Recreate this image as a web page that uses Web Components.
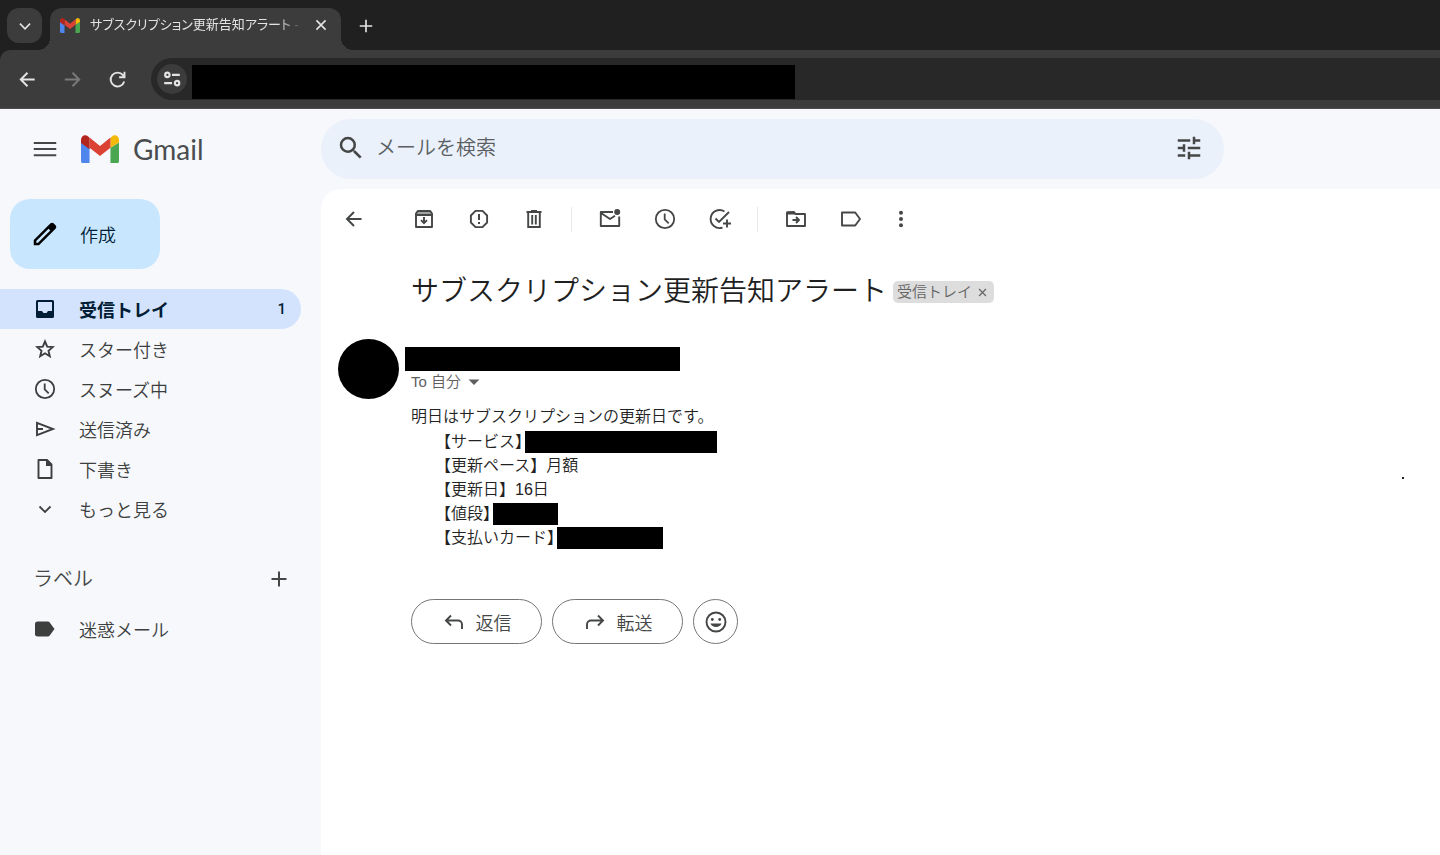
<!DOCTYPE html>
<html lang="ja">
<head>
<meta charset="utf-8">
<meta name="viewport" content="width=device-width, initial-scale=1">
<title>サブスクリプション更新告知アラート - Gmail</title>
<style>
    body {
        margin: 0;
        min-height: 100vh;
        display: flex;
        flex-direction: column;
        background: #f6f8fc;
        color: #444746;
        font-family: "Liberation Sans", "Noto Sans CJK JP", sans-serif;
        font-size: 18px;
    }
</style>
</head>
<body>
<browser-chrome tab-title="サブスクリプション更新告知アラート -"></browser-chrome>
<mail-app>
    <mail-header slot="header"></mail-header>
    <mail-sidebar slot="sidebar">
        <nav-item icon="inbox" count="1" active>受信トレイ</nav-item>
        <nav-item icon="star">スター付き</nav-item>
        <nav-item icon="clock">スヌーズ中</nav-item>
        <nav-item icon="send">送信済み</nav-item>
        <nav-item icon="draft">下書き</nav-item>
        <nav-item icon="chevron">もっと見る</nav-item>
        <nav-item slot="labels" icon="label-fill">迷惑メール</nav-item>
    </mail-sidebar>
    <mail-toolbar></mail-toolbar>
    <mail-message subject="サブスクリプション更新告知アラート" label="受信トレイ">
        <span slot="lead">明日はサブスクリプションの更新日です。</span>
        <mail-field name="サービス" hide="192"></mail-field>
        <mail-field name="更新ペース">月額</mail-field>
        <mail-field name="更新日">16日</mail-field>
        <mail-field name="値段" hide="65"></mail-field>
        <mail-field name="支払いカード" hide="106"></mail-field>
    </mail-message>
</mail-app>

<script>
const ICONS = {
    'menu': '<path d="M3 17.700h18v-1.600H3v1.600zm0-4.900h18v-1.600H3v1.600zm0-6.500v1.600h18V6.300H3z"/>',
    'search': '<path d="M15.5 14h-.79l-.28-.27A6.47 6.47 0 0 0 16 9.5 6.5 6.5 0 1 0 9.5 16c1.61 0 3.09-.59 4.23-1.57l.27.28v.79l5 4.99L20.49 19l-4.99-5zm-6 0a4.5 4.5 0 1 1 0-9 4.5 4.5 0 0 1 0 9z"/>',
    'tune': '<path d="M3 17v2h6v-2H3zM3 5v2h10V5H3zm10 16v-2h8v-2h-8v-2h-2v6h2zM7 9v2H3v2h4v2h2V9H7zm14 4v-2H11v2h10zm-6-4h2V7h4V5h-4V3h-2v6z"/>',
    'pen': '<path d="M20.41 4.94l-1.35-1.35c-.78-.78-2.05-.78-2.83 0L13.4 6.41 3 16.82V21h4.18l10.46-10.46 2.77-2.77c.79-.78.79-2.05 0-2.83zm-14 14.12L5 19v-1.36l9.82-9.82 1.41 1.41-9.82 9.83z"/>',
    'inbox': '<path d="M19.500 3h-15A1.500 1.500 0 0 0 3 4.500v15A1.500 1.500 0 0 0 4.500 21h15a1.500 1.500 0 0 0 1.500-1.500v-15A1.500 1.500 0 0 0 19.500 3zm-.5 11h-4l-1.500 2h-3L9 14H5V5h14v9z"/>',
    'star': '<path fill="none" stroke="currentColor" stroke-width="1.9" d="M12 4.500l2.200 5.100 5.500.5-4.200 3.700 1.300 5.400-4.800-2.900-4.800 2.900 1.300-5.400-4.200-3.700 5.500-.5z"/>',
    'clock': '<g fill="none" stroke="currentColor" stroke-width="1.8"><circle cx="12" cy="12" r="9.200"/><path d="M11.700 6.500V12.400l4 4"/></g>',
    'send': '<path fill="none" stroke="currentColor" stroke-width="1.9" d="M4 5.800L20 12 4 18.200zM4 12h6"/>',
    'draft': '<path fill="none" stroke="currentColor" stroke-width="1.9" stroke-linejoin="round" d="M6 3h8l4.500 4.500V21H5.500V3z"/><path d="M13 3v6h6l-5-6z"/>',
    'chevron': '<path fill="none" stroke="currentColor" stroke-width="1.8" d="M6.500 9.500l5.500 5.500 5.500-5.500"/>',
    'label-fill': '<path d="M16.500 5.300C16.100 4.800 15.600 4.500 15 4.500H4.800C3.400 4.500 2 5.300 2 6.700v10.600c0 1.400 1.400 2.200 2.800 2.200H15c.6 0 1.100-.3 1.500-.8L21.500 12z"/>',
    'label': '<path fill="none" stroke="currentColor" stroke-width="1.9" stroke-linejoin="round" d="M3 5.500h13.200L21 12l-4.800 6.500H3z"/>',
    'plus': '<path fill="none" stroke="currentColor" stroke-width="2" d="M12 4.500v15M4.500 12h15"/>',
    'back': '<path fill="none" stroke="currentColor" stroke-width="2" d="M19.500 12H5M12 5l-7 7 7 7"/>',
    'forward': '<path fill="none" stroke="currentColor" stroke-width="2" d="M4 12h14.500M12 5l7 7-7 7"/>',
    'reload': '<path fill="none" stroke="currentColor" stroke-width="2" d="M19 14a7.200 7.200 0 1 1-1.300-6.500l1.500 1.800M19.300 4v5.600h-5.600"/>',
    'close': '<path fill="none" stroke="currentColor" stroke-width="2" d="M6.500 6.500l11 11M17.500 6.500l-11 11"/>',
    'site': '<g fill="none" stroke="currentColor" stroke-width="2.400"><circle cx="7" cy="7.500" r="2.400"/><path d="M12 7.500H20.500M3.500 16.500H12"/><circle cx="17.500" cy="16.500" r="2.400"/></g>',
    'archive': '<path fill="none" stroke="currentColor" stroke-width="1.900" stroke-linejoin="round" d="M4 6.500V20h16V6.500L18.200 4H5.800zM4 8h16"/><path fill-opacity=".5" d="M4 5h16v3H4z"/><path fill="none" stroke="currentColor" stroke-width="1.900" d="M12 10v6M9 13.200l3 3 3-3"/>',
    'spam': '<path fill="none" stroke="currentColor" stroke-width="1.900" stroke-linejoin="round" d="M8.500 3.900h7L20.100 8.500v7l-4.600 4.600h-7L3.900 15.500v-7z"/><path d="M11 7h2v6h-2zM11 15h2v2h-2z"/>',
    'trash': '<path fill="none" stroke="currentColor" stroke-width="1.900" d="M4.500 5h15M9 4h6M6.200 5v15h11.600V5M10.200 8v9.500M13.800 8v9.500"/>',
    'unread': '<path fill="none" stroke="currentColor" stroke-width="1.900" stroke-linejoin="round" d="M15 5H2.800v14h18.400V9.500M3 6l9 6 5-3.200"/><circle cx="19.200" cy="5" r="3"/>',
    'task': '<path fill="none" stroke="currentColor" stroke-width="1.900" d="M16.500 4.500A9 9 0 1 0 14.500 20.600M7.500 11.500l3.500 3.500L21 5M19 12.500v8M15 16.500h8"/>',
    'move': '<path fill="none" stroke="currentColor" stroke-width="1.900" stroke-linejoin="round" d="M3 5.500V19h18V7H11.500L10 5zM8.500 13h6M12 10l3 3-3 3"/><path d="M3 4.500h7l2 3H3z"/>',
    'more': '<circle cx="12" cy="5.800" r="2"/><circle cx="12" cy="12" r="2"/><circle cx="12" cy="18.200" r="2"/>',
    'reply': '<path fill="none" stroke="currentColor" stroke-width="1.900" d="M9 5.500L4 10.500l5 5M4.500 10.500H16a4 4 0 0 1 4 4V19"/>',
    'send-on': '<path fill="none" stroke="currentColor" stroke-width="1.900" d="M15 5.500l5 5-5 5M19.500 10.500H8a4 4 0 0 0-4 4V19"/>',
    'smile': '<circle cx="12" cy="12" r="9.500" fill="none" stroke="currentColor" stroke-width="1.900"/><circle cx="8.300" cy="9.500" r="1.400"/><circle cx="15.700" cy="9.500" r="1.400"/><path d="M6.500 13.500h11c-.7 2.200-2.900 3.500-5.500 3.500s-4.800-1.300-5.500-3.500z"/>',
    'caret': '<path d="M5.500 9h13L12 15.500z"/>',
    'gmail': `<path fill="#4f86ee" d="M0 8v19a3 3 0 0 0 3 3h6V13.500z"/>
        <path fill="#4aa651" d="M31 30h6a3 3 0 0 0 3-3V8l-9 5.500z"/>
        <path fill="#f4b80a" d="M31 3.500v10L40 8V5c0-4.300-4.600-6.200-7.500-3.500z"/>
        <path fill="#dc4234" d="M9 13.500v-11L20 11.500 31 2.500v11L20 22z"/>
        <path fill="#b3261e" d="M0 5v3.500l9 6.500V3L7.500 1.500C4.600-1.200 0 .7 0 5z"/>`
};

class SvgIcon extends HTMLElement {
    connectedCallback() {
        const name = this.getAttribute('name');
        const size = this.getAttribute('size') || 24;
        const box = name === 'gmail' ? '0 0 40 30' : '0 0 24 24';
        this.attachShadow({ mode: 'open' });
        this.shadowRoot.innerHTML = `
            <style>
                :host { display: inline-flex; flex: none; }
                svg { display: block; fill: currentColor; }
            </style>
            <svg width="${size}" height="${name === 'gmail' ? size * 3 / 4 : size}" viewBox="${box}" aria-hidden="true">${ICONS[name]}</svg>
        `;
    }
}

class BrowserChrome extends HTMLElement {
    connectedCallback() {
        this.attachShadow({ mode: 'open' });
        this.shadowRoot.innerHTML = `
            <style>
                :host { display: block; background: #202020; color: #e3e3e3; }
                button {
                    display: flex;
                    align-items: center;
                    justify-content: center;
                    padding: 0;
                    border: 0;
                    background: none;
                    color: inherit;
                }
                .tabs { display: flex; align-items: center; height: 42px; padding: 8px 8px 0 7px; }
                .tab-list {
                    align-self: flex-start;
                    width: 35px;
                    height: 35px;
                    margin-right: 8px;
                    border-radius: 12px;
                    background: #3c3c3c;
                }
                .tab {
                    position: relative;
                    display: flex;
                    align-items: center;
                    box-sizing: border-box;
                    width: 291px;
                    height: 42px;
                    padding: 0 10px 8px;
                    border-radius: 12px 12px 0 0;
                    background: #3c3c3c;
                }
                .tab::before, .tab::after {
                    content: "";
                    position: absolute;
                    bottom: 0;
                    width: 12px;
                    height: 12px;
                }
                .tab::before { right: 100%; background: radial-gradient(circle at 0 0, transparent 12px, #3c3c3c 12px); }
                .tab::after { left: 100%; background: radial-gradient(circle at 100% 0, transparent 12px, #3c3c3c 12px); }
                .title {
                    flex: 1;
                    margin: 0 8px 0 10px;
                    overflow: hidden;
                    white-space: nowrap;
                    font-size: 13px;
                    line-height: 20px;
                    font-feature-settings: "palt";
                    -webkit-mask-image: linear-gradient(to right, #000 88%, transparent);
                    mask-image: linear-gradient(to right, #000 88%, transparent);
                }
                .new { width: 30px; height: 35px; margin-left: 10px; align-self: flex-start; }
                .bar {
                    display: flex;
                    align-items: center;
                    height: 58px;
                    padding-left: 12px;
                    border-bottom: 1px solid #4c4c4c;
                    border-radius: 10px 0 0 0;
                    background: #3c3c3c;
                }
                .bar > button { width: 30px; height: 30px; margin-right: 15px; }
                .bar > button:disabled { color: #7a7a7a; }
                .address {
                    flex: 1;
                    display: flex;
                    align-items: center;
                    height: 42px;
                    margin-left: 4px;
                    padding-left: 6px;
                    border-radius: 21px 0 0 21px;
                    background: #282828;
                }
                .site { width: 30px; height: 30px; border-radius: 50%; background: #3c3c3c; }
                .url { width: 603px; height: 34px; margin: 6px 0 0 5px; background: #000; }
            </style>
            <div class="tabs">
                <button class="tab-list" aria-label="タブを検索"><svg-icon name="chevron" size="22"></svg-icon></button>
                <div class="tab">
                    <svg-icon name="gmail" size="20"></svg-icon>
                    <span class="title">${this.getAttribute('tab-title')}</span>
                    <button aria-label="閉じる"><svg-icon name="close" size="20"></svg-icon></button>
                </div>
                <button class="new" aria-label="新しいタブ"><svg-icon name="plus" size="20"></svg-icon></button>
            </div>
            <div class="bar">
                <button aria-label="戻る"><svg-icon name="back" size="23"></svg-icon></button>
                <button aria-label="進む" disabled><svg-icon name="forward" size="23"></svg-icon></button>
                <button aria-label="再読み込み"><svg-icon name="reload" size="23"></svg-icon></button>
                <div class="address">
                    <button class="site" aria-label="サイト情報"><svg-icon name="site" size="22"></svg-icon></button>
                    <div class="url"></div>
                </div>
            </div>
        `;
    }
}

class MailApp extends HTMLElement {
    connectedCallback() {
        this.attachShadow({ mode: 'open' });
        this.shadowRoot.innerHTML = `
            <style>
                :host { flex: 1; display: flex; flex-direction: column; }
                .content { flex: 1; display: grid; grid-template-columns: 321px minmax(0, 1fr); }
                main { border-radius: 20px 0 0 0; background: #fff; }
            </style>
            <slot name="header"></slot>
            <div class="content">
                <slot name="sidebar"></slot>
                <main><slot></slot></main>
            </div>
        `;
    }
}

class MailHeader extends HTMLElement {
    connectedCallback() {
        this.attachShadow({ mode: 'open' });
        this.shadowRoot.innerHTML = `
            <style>
                :host { display: flex; align-items: center; height: 80px; }
                button { display: flex; padding: 0; border: 0; background: none; color: inherit; }
                .brand {
                    display: flex;
                    align-items: center;
                    box-sizing: border-box;
                    width: 321px;
                    padding-left: 30px;
                }
                .logo {
                    display: flex;
                    align-items: center;
                    gap: 14px;
                    margin-left: 21px;
                    color: #4a4d50;
                    font: 28px/40px Lato, Roboto, sans-serif;
                    text-decoration: none;
                }
                form {
                    flex: 0 1 903px;
                    display: flex;
                    align-items: center;
                    box-sizing: border-box;
                    height: 60px;
                    padding: 0 20px 2px 15px;
                    border-radius: 30px;
                    background: #eaf1fb;
                }
                input {
                    flex: 1;
                    min-width: 0;
                    padding: 0;
                    margin: 0 12px 0 10px;
                    border: 0;
                    outline: 0;
                    background: none;
                    font: inherit;
                    font-size: 20px;
                    font-weight: 350;
                }
                input::placeholder { color: #5b5f63; opacity: 1; }
            </style>
            <div class="brand">
                <button aria-label="メインメニュー"><svg-icon name="menu" size="30"></svg-icon></button>
                <a class="logo" href="#"><svg-icon name="gmail" size="38"></svg-icon>Gmail</a>
            </div>
            <form role="search">
                <button type="button" aria-label="検索"><svg-icon name="search" size="30"></svg-icon></button>
                <input type="text" placeholder="メールを検索" aria-label="メールを検索">
                <button type="button" aria-label="検索オプション"><svg-icon name="tune" size="30"></svg-icon></button>
            </form>
        `;
    }
}

class MailSidebar extends HTMLElement {
    connectedCallback() {
        this.attachShadow({ mode: 'open' });
        this.shadowRoot.innerHTML = `
            <style>
                :host { display: block; padding: 10px 20px 0 0; }
                button { padding: 0; border: 0; background: none; color: inherit; font: inherit; }
                .compose {
                    display: flex;
                    align-items: center;
                    gap: 20px;
                    width: 150px;
                    height: 70px;
                    margin: 0 0 20px 10px;
                    padding-left: 20px;
                    border-radius: 20px;
                    background: #c8e7ff;
                    color: #001d35;
                    font-weight: 350;
                }
                .compose svg-icon { color: #000; }
                .labels {
                    display: flex;
                    align-items: center;
                    justify-content: space-between;
                    height: 40px;
                    margin: 30px 0 10px;
                    padding: 0 10px 0 33px;
                }
                h2 { margin: 0; font-size: 20px; font-weight: 350; line-height: 40px; }
                .labels button { display: flex; }
            </style>
            <button class="compose"><svg-icon name="pen" size="30"></svg-icon>作成</button>
            <nav><slot></slot></nav>
            <div class="labels">
                <h2>ラベル</h2>
                <button aria-label="新しいラベルを作成"><svg-icon name="plus"></svg-icon></button>
            </div>
            <slot name="labels"></slot>
        `;
    }
}

class NavItem extends HTMLElement {
    connectedCallback() {
        this.attachShadow({ mode: 'open' });
        this.shadowRoot.innerHTML = `
            <style>
                :host { display: block; }
                a {
                    display: flex;
                    align-items: center;
                    height: 40px;
                    padding: 0 15px 0 33px;
                    border-radius: 0 20px 20px 0;
                    color: #3c3f3e;
                    font-weight: 350;
                    text-decoration: none;
                }
                :host([active]) a { background: #d3e3fd; color: #001d35; font-weight: 700; }
                .text { flex: 1; margin-left: 22px; }
                .count { font: 500 15px Roboto, sans-serif; }
            </style>
            <a href="#">
                <svg-icon name="${this.getAttribute('icon')}"></svg-icon>
                <span class="text"><slot></slot></span>
                <span class="count">${this.getAttribute('count') || ''}</span>
            </a>
        `;
    }
}

class MailToolbar extends HTMLElement {
    connectedCallback() {
        const button = (icon, label) => `<button class="${icon}" aria-label="${label}"><svg-icon name="${icon}"></svg-icon></button>`;
        this.attachShadow({ mode: 'open' });
        this.shadowRoot.innerHTML = `
            <style>
                :host { display: flex; align-items: center; gap: 15px; height: 60px; padding-left: 13px; }
                button {
                    display: flex;
                    justify-content: center;
                    width: 40px;
                    padding: 0;
                    border: 0;
                    background: none;
                    color: inherit;
                }
                .back { margin-right: 15px; }
                .more { width: 30px; }
                hr { width: 1px; height: 25px; margin: 0 3px 0 2px; border: 0; background: #e6e8eb; }
            </style>
            ${button('back', '受信トレイに戻る')}
            ${button('archive', 'アーカイブ')}
            ${button('spam', '迷惑メールを報告')}
            ${button('trash', '削除')}
            <hr>
            ${button('unread', '未読にする')}
            ${button('clock', 'スヌーズ')}
            ${button('task', 'ToDo リストに追加')}
            <hr>
            ${button('move', '移動')}
            ${button('label', 'ラベル')}
            ${button('more', 'その他')}
        `;
    }
}

class MailMessage extends HTMLElement {
    connectedCallback() {
        this.attachShadow({ mode: 'open' });
        this.shadowRoot.innerHTML = `
            <style>
                :host { display: block; padding: 22px 36px 20px 90px; color: #222; }
                button { display: flex; align-items: center; padding: 0; border: 0; background: none; color: inherit; font: inherit; }
                .subject { display: flex; align-items: center; gap: 6px; }
                h1 { margin: 0; font-size: 28px; font-weight: 350; line-height: 42px; color: #1f1f1f; }
                .chip {
                    display: flex;
                    align-items: center;
                    gap: 3px;
                    height: 22px;
                    padding: 0 4px;
                    border-radius: 5px;
                    background: #ddd;
                    color: #666;
                    font-size: 15px;
                    font-weight: 350;
                    line-height: 22px;
                }
                .sender { display: flex; gap: 6px; margin: 26px 0 0 -73px; }
                .avatar { width: 61px; height: 60px; border-radius: 50%; background: #000; }
                .from { width: 275px; height: 24px; margin-top: 8px; background: #000; }
                .to { gap: 3px; margin-left: 6px; color: #5e5e5e; font-size: 15px; font-weight: 350; line-height: 22px; }
                .body { display: flex; align-items: center; justify-content: space-between; margin-top: 6px; }
                .text { font-size: 16px; font-weight: 350; line-height: 24px; }
                .fields { margin: 1px 0 0 24px; }
                .dot { width: 2px; height: 2px; background: #222; }
                .actions { display: flex; gap: 10px; margin-top: 49px; color: #444746; }
                .actions button {
                    justify-content: center;
                    gap: 10px;
                    box-sizing: border-box;
                    width: 131px;
                    height: 45px;
                    border: 1px solid #747775;
                    border-radius: 23px;
                    font-weight: 350;
                }
                .actions .react { width: 45px; }
            </style>
            <div class="subject">
                <h1>${this.getAttribute('subject')}</h1>
                <span class="chip">${this.getAttribute('label')}<button aria-label="ラベルを削除"><svg-icon name="close" size="15"></svg-icon></button></span>
            </div>
            <div class="sender">
                <div class="avatar"></div>
                <div>
                    <div class="from"></div>
                    <button class="to">To 自分<svg-icon name="caret" size="20"></svg-icon></button>
                </div>
            </div>
            <div class="body">
                <div class="text">
                    <slot name="lead"></slot>
                    <div class="fields"><slot></slot></div>
                </div>
                <span class="dot"></span>
            </div>
            <div class="actions">
                <button><svg-icon name="reply"></svg-icon>返信</button>
                <button><svg-icon name="send-on"></svg-icon>転送</button>
                <button class="react" aria-label="リアクションを追加"><svg-icon name="smile"></svg-icon></button>
            </div>
        `;
    }
}

class MailField extends HTMLElement {
    connectedCallback() {
        const hide = this.getAttribute('hide');
        this.attachShadow({ mode: 'open' });
        this.shadowRoot.innerHTML = `
            <style>
                :host { display: flex; align-items: center; height: 24px; font-size: 16px; line-height: 24px; }
                .hidden { height: 22px; margin-left: -6px; background: #000; }
            </style>
            <span>【${this.getAttribute('name')}】<slot></slot></span>
            ${hide ? `<span class="hidden" style="width: ${hide}px"></span>` : ''}
        `;
    }
}

customElements.define('svg-icon', SvgIcon);
customElements.define('browser-chrome', BrowserChrome);
customElements.define('mail-app', MailApp);
customElements.define('mail-header', MailHeader);
customElements.define('mail-sidebar', MailSidebar);
customElements.define('nav-item', NavItem);
customElements.define('mail-toolbar', MailToolbar);
customElements.define('mail-message', MailMessage);
customElements.define('mail-field', MailField);
</script>
</body>
</html>
